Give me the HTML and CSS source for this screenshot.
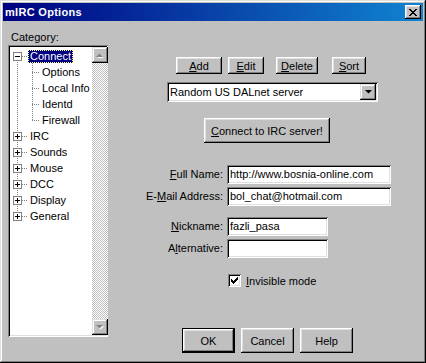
FILE: index.html
```html
<!DOCTYPE html>
<html>
<head>
<meta charset="utf-8">
<title>mIRC Options</title>
<link rel="stylesheet" href="styles.css">
</head>
<body>
<div class="window">
  <div class="titlebar">
    <span class="title">mIRC Options</span>
    <span class="close">
      <svg width="8" height="7" viewBox="0 0 8 7"><path d="M0 0h2v1h1v1h2v-1h1v-1h2v1h-1v1h-1v1h-1v1h1v1h1v1h1v1h-2v-1h-1v-1h-2v1h-1v1h-2v-1h1v-1h1v-1h1v-1h-1v-1h-1v-1h-1z" fill="#000"/></svg>
    </span>
  </div>
  <div class="body">
    <div class="left">
      <div class="cat-label">Category:</div>
      <div class="tree">
        <div class="tree-items">
          <div class="row top">
            <svg class="exp" width="9" height="9" viewBox="0 0 9 9"><rect x="0.5" y="0.5" width="8" height="8" fill="#fff" stroke="#808080"/><path d="M2 4.5h5" stroke="#000"/></svg>
            <span class="conn"></span><span class="lbl sel">Connect</span>
          </div>
          <div class="row child"><span class="conn cconn"></span><span class="lbl">Options</span></div>
          <div class="row child"><span class="conn cconn"></span><span class="lbl">Local Info</span></div>
          <div class="row child"><span class="conn cconn"></span><span class="lbl">Identd</span></div>
          <div class="row child"><span class="conn cconn"></span><span class="lbl">Firewall</span></div>
          <div class="row top">
            <svg class="exp" width="9" height="9" viewBox="0 0 9 9"><rect x="0.5" y="0.5" width="8" height="8" fill="#fff" stroke="#808080"/><path d="M2 4.5h5M4.5 2v5" stroke="#000"/></svg>
            <span class="conn"></span><span class="lbl">IRC</span>
          </div>
          <div class="row top">
            <svg class="exp" width="9" height="9" viewBox="0 0 9 9"><rect x="0.5" y="0.5" width="8" height="8" fill="#fff" stroke="#808080"/><path d="M2 4.5h5M4.5 2v5" stroke="#000"/></svg>
            <span class="conn"></span><span class="lbl">Sounds</span>
          </div>
          <div class="row top">
            <svg class="exp" width="9" height="9" viewBox="0 0 9 9"><rect x="0.5" y="0.5" width="8" height="8" fill="#fff" stroke="#808080"/><path d="M2 4.5h5M4.5 2v5" stroke="#000"/></svg>
            <span class="conn"></span><span class="lbl">Mouse</span>
          </div>
          <div class="row top">
            <svg class="exp" width="9" height="9" viewBox="0 0 9 9"><rect x="0.5" y="0.5" width="8" height="8" fill="#fff" stroke="#808080"/><path d="M2 4.5h5M4.5 2v5" stroke="#000"/></svg>
            <span class="conn"></span><span class="lbl">DCC</span>
          </div>
          <div class="row top">
            <svg class="exp" width="9" height="9" viewBox="0 0 9 9"><rect x="0.5" y="0.5" width="8" height="8" fill="#fff" stroke="#808080"/><path d="M2 4.5h5M4.5 2v5" stroke="#000"/></svg>
            <span class="conn"></span><span class="lbl">Display</span>
          </div>
          <div class="row top">
            <svg class="exp" width="9" height="9" viewBox="0 0 9 9"><rect x="0.5" y="0.5" width="8" height="8" fill="#fff" stroke="#808080"/><path d="M2 4.5h5M4.5 2v5" stroke="#000"/></svg>
            <span class="conn"></span><span class="lbl">General</span>
          </div>
        </div>
        <div class="vscroll">
          <div class="sbtn">
            <svg width="7" height="5" viewBox="0 0 7 5"><path d="M1 5h7l-3.5-3.5z" fill="#fff"/><path d="M0 4h7L3.5 0.5z" fill="#808080"/></svg>
          </div>
          <div class="track"></div>
          <div class="sbtn">
            <svg width="8" height="5" viewBox="0 0 8 5"><path d="M1 1h7L4.5 4.5z" fill="#fff"/><path d="M0 0h7L3.5 3.5z" fill="#808080"/></svg>
          </div>
        </div>
      </div>
    </div>

    <div class="right">
      <div class="btnrow">
        <button class="btn b-add"><u>A</u>dd</button>
        <button class="btn b-edit"><u>E</u>dit</button>
        <button class="btn b-del"><u>D</u>elete</button>
        <button class="btn b-sort"><u>S</u>ort</button>
      </div>

      <div class="combo">
        <span class="combo-text">Random US DALnet server</span>
        <span class="combo-btn">
          <svg width="7" height="4" viewBox="0 0 7 4"><path d="M0 0h7L3.5 3.5z" fill="#000"/></svg>
        </span>
      </div>

      <button class="btn connect"><u>C</u>onnect to IRC server!</button>

      <div class="fields g1">
        <span class="flabel"><u>F</u>ull Name:</span>
        <div class="input wide">http://www.bosnia-online.com</div>
        <span class="flabel">E-<u>M</u>ail Address:</span>
        <div class="input wide">bol_chat@hotmail.com</div>
      </div>

      <div class="fields g2">
        <span class="flabel"><u>N</u>ickname:</span>
        <div class="input narrow">fazli_pasa</div>
        <span class="flabel">A<u>l</u>ternative:</span>
        <div class="input narrow"></div>
      </div>

      <div class="check-row">
        <span class="checkbox">
          <svg width="7" height="7" viewBox="0 0 7 7"><path d="M0 2h1v1h1v1h1v-1h1v-1h1v-1h1v-1h1v3h-1v1h-1v1h-1v1h-1v1h-1v-1h-1v-1h-1z" fill="#000"/></svg>
        </span>
        <span class="check-label"><u>I</u>nvisible mode</span>
      </div>

      <div class="footer">
        <button class="btn fbtn default">OK</button>
        <button class="btn fbtn">Cancel</button>
        <button class="btn fbtn">Help</button>
      </div>
    </div>
  </div>
</div>
</body>
</html>
```

FILE: styles.css
```css
html, body {
  margin: 0;
  padding: 0;
  background: #c0c0c0;
}

body {
  font-family: "Liberation Sans", Arial, sans-serif;
  font-size: 11px;
  color: #000;
}

.window {
  width: 426px;
  height: 363px;
  box-sizing: border-box;
  padding: 3px;
  background: #c0c0c0;
  box-shadow: inset -1px -1px #000, inset 1px 1px #dfdfdf, inset -2px -2px #808080, inset 2px 2px #fff;
}

/* title bar */
.titlebar {
  height: 18px;
  display: flex;
  align-items: center;
  justify-content: space-between;
  padding: 0 2px;
  background: linear-gradient(to right, #000080, #1084d0);
}

.title {
  color: #fff;
  font-weight: bold;
  font-size: 11px;
  letter-spacing: 0.3px;
}

.close {
  width: 16px;
  height: 14px;
  box-sizing: border-box;
  background: #c0c0c0;
  display: flex;
  align-items: center;
  justify-content: center;
  box-shadow: inset -1px -1px #000, inset 1px 1px #fff, inset -2px -2px #808080, inset 2px 2px #dfdfdf;
}

/* layout */
.body {
  display: flex;
  height: 339px;
}

.left {
  margin-left: 5px;
  width: 100px;
  padding-top: 10px;
}

.cat-label {
  height: 13px;
  line-height: 13px;
  padding-left: 3px;
}

/* tree */
.tree {
  margin-top: 1px;
  width: 100px;
  height: 292px;
  box-sizing: border-box;
  padding: 2px;
  display: flex;
  background: #fff;
  box-shadow: inset 1px 1px #808080, inset -1px -1px #fff, inset 2px 2px #000, inset -2px -2px #dfdfdf;
}

.tree-items {
  flex: 1;
  padding: 1px 0 0 3px;
  background-image:
    repeating-linear-gradient(to bottom, #808080 0 1px, transparent 1px 2px),
    repeating-linear-gradient(to bottom, #808080 0 1px, transparent 1px 2px);
  background-size: 1px 160px, 1px 57px;
  background-position: 7px 9px, 22px 16px;
  background-repeat: no-repeat;
}

.row {
  height: 16px;
  display: flex;
  align-items: center;
}

.exp {
  display: block;
  flex: none;
}

.conn {
  width: 5px;
  height: 1px;
  flex: none;
  background: repeating-linear-gradient(to right, #808080 0 1px, transparent 1px 2px);
}

.row.child {
  padding-left: 19px;
}

.conn.cconn {
  width: 7px;
}

.lbl {
  height: 13px;
  line-height: 13px;
  padding: 0 2px;
  margin-left: 1px;
  white-space: nowrap;
}

.lbl.sel {
  background: #000080;
  color: #fff;
  outline: 1px dotted #ffff80;
  outline-offset: -1px;
}

.vscroll {
  width: 16px;
  display: flex;
  flex-direction: column;
}

.sbtn {
  width: 16px;
  height: 16px;
  box-sizing: border-box;
  background: #c0c0c0;
  display: flex;
  align-items: center;
  justify-content: center;
  box-shadow: inset -1px -1px #000, inset 1px 1px #dfdfdf, inset -2px -2px #808080, inset 2px 2px #fff;
}

.track {
  flex: 1;
  background-color: #fff;
  background-image: conic-gradient(#c0c0c0 0 25%, #fff 0 50%, #c0c0c0 0 75%, #fff 0);
  background-size: 2px 2px;
}

/* right side */
.right {
  margin-left: 32px;
  width: 251px;
  padding-top: 36px;
}

.btn {
  font-family: "Liberation Sans", Arial, sans-serif;
  font-size: 11px;
  color: #000;
  background: #c0c0c0;
  border: none;
  padding: 0;
  margin: 0;
  box-sizing: border-box;
  display: flex;
  align-items: center;
  justify-content: center;
  box-shadow: inset -1px -1px #000, inset 1px 1px #fff, inset -2px -2px #808080, inset 2px 2px #dfdfdf;
}

.btnrow {
  display: flex;
  height: 17px;
}

.btnrow .btn {
  height: 17px;
}

.b-add { margin-left: 36px; width: 46px; }
.b-edit { margin-left: 6px; width: 36px; }
.b-del { margin-left: 12px; width: 42px; }
.b-sort { margin-left: 14px; width: 34px; }

.combo {
  margin-top: 8px;
  margin-left: 27px;
  width: 211px;
  height: 20px;
  box-sizing: border-box;
  padding: 2px;
  background: #fff;
  display: flex;
  align-items: center;
  box-shadow: inset 1px 1px #808080, inset -1px -1px #fff, inset 2px 2px #000, inset -2px -2px #dfdfdf;
}

.combo-text {
  flex: 1;
  padding-left: 1px;
  white-space: nowrap;
}

.combo-btn {
  width: 16px;
  height: 16px;
  box-sizing: border-box;
  background: #c0c0c0;
  display: flex;
  align-items: center;
  justify-content: center;
  box-shadow: inset -1px -1px #000, inset 1px 1px #dfdfdf, inset -2px -2px #808080, inset 2px 2px #fff;
}

.btn.connect {
  margin-top: 16px;
  margin-left: 64px;
  width: 126px;
  height: 25px;
}

.fields {
  display: grid;
  grid-template-columns: 83px auto;
  column-gap: 4px;
  row-gap: 3px;
  align-items: center;
}

.fields.g1 { margin-top: 22px; }
.fields.g2 { margin-top: 11px; }

.flabel {
  text-align: right;
  white-space: nowrap;
  line-height: 19px;
}

.input {
  height: 19px;
  box-sizing: border-box;
  padding: 0 2px 0 3px;
  line-height: 19px;
  background: #fff;
  white-space: nowrap;
  overflow: hidden;
  box-shadow: inset 1px 1px #808080, inset -1px -1px #fff, inset 2px 2px #000, inset -2px -2px #dfdfdf;
}

.input.wide { width: 164px; }
.input.narrow { width: 101px; }

.check-row {
  margin-top: 16px;
  margin-left: 88px;
  display: flex;
  align-items: center;
  height: 13px;
}

.checkbox {
  width: 13px;
  height: 13px;
  box-sizing: border-box;
  background: #fff;
  display: flex;
  align-items: center;
  justify-content: center;
  box-shadow: inset 1px 1px #808080, inset -1px -1px #fff, inset 2px 2px #000, inset -2px -2px #dfdfdf;
}

.check-label {
  margin-left: 5px;
}

.footer {
  margin-top: 41px;
  margin-left: 42px;
  display: flex;
  gap: 6px;
}

.btn.fbtn {
  width: 53px;
  height: 25px;
}

.btn.default {
  border: 1px solid #000;
}
```
